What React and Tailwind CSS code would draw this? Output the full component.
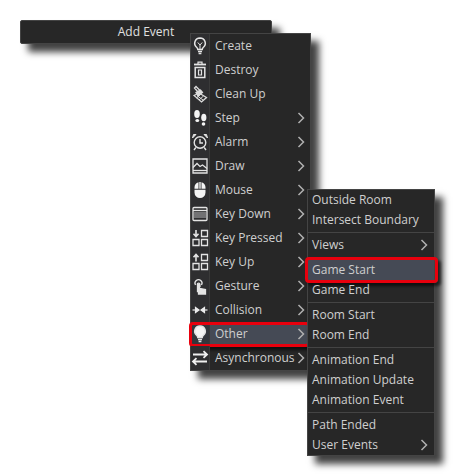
import React from 'react';

const Bulb = ({ filled }) => (
  <svg width="18" height="18" viewBox="0 0 18 18" fill={filled ? '#f4f4f4' : 'none'} stroke="#e4e4e4" strokeWidth="1.500">
    <path d="M9 1a5.300 5.300 0 0 0-3.200 9.500c.7.600 1 1.200 1 2h4.400c0-.8.300-1.400 1-2A5.300 5.300 0 0 0 9 1z" />
    <path d="M7 14.500h4M7.600 16.500h2.800" />
    {!filled && <path d="M6.800 5.500 9 8l2.200-2.500M9 8v4" strokeWidth="1" />}
  </svg>
);

const Trash = () => (
  <svg width="18" height="18" viewBox="0 0 18 18" fill="none" stroke="#e4e4e4" strokeWidth="1.500">
    <path d="M3 3.500h12" strokeWidth="1.800" />
    <path d="M7 3V1.200h4V3" strokeWidth="1.200" />
    <path d="M4.200 6.500h9.600v10H4.200z" />
    <path d="M7.500 9v5h3V9z" strokeWidth="1.200" />
  </svg>
);

const Brush = () => (
  <svg width="18" height="18" viewBox="0 0 18 18" fill="none" stroke="#dcdcdc" strokeWidth="1.300">
    <path d="M5 1.500 3.500 3l3.500 4 2-1.500z" />
    <path d="M5 7.500 9.500 5l2 2.500-4.500 3.500z" fill="#dcdcdc" />
    <path d="M3 10.500 8 8l7.500 4.500-5 4.500z" />
    <path d="M6.500 11 12 15M5.500 13l4-3.500M8 15l4.500-4" strokeWidth="1" />
  </svg>
);

const Steps = () => (
  <svg width="18" height="18" viewBox="0 0 18 18" fill="#f4f4f4">
    <ellipse cx="6" cy="5" rx="2.800" ry="4" />
    <ellipse cx="6.300" cy="11.500" rx="1.900" ry="1.500" />
    <ellipse cx="12.800" cy="8.500" rx="2.600" ry="3.800" />
    <ellipse cx="12.500" cy="15" rx="1.800" ry="1.700" />
  </svg>
);

const AlarmClock = () => (
  <svg width="18" height="18" viewBox="0 0 18 18" fill="none" stroke="#e4e4e4" strokeWidth="1.400">
    <circle cx="9" cy="9.500" r="5.800" />
    <path d="M9 6v4h3" />
    <path d="M1.500 5 5 1.500H2.500zM16.500 5 13 1.500h2.500z" fill="#e4e4e4" strokeWidth="1" />
    <path d="M4.800 14.500 3 17M13.200 14.500 15 17" />
  </svg>
);

const Picture = () => (
  <svg width="18" height="18" viewBox="0 0 18 18" fill="none" stroke="#e4e4e4" strokeWidth="1.300">
    <path d="M2 2h14v14H2z" />
    <path d="M2 10.500 6 6.500l3 3 2.500-1.500 4.500 3.500" />
    <path d="M2 13.500h14" />
  </svg>
);

const MouseIcon = () => (
  <svg width="18" height="18" viewBox="0 0 18 18" fill="#f4f4f4">
    <path d="M3.500 8.800h11v2.700a5.500 5.500 0 0 1-11 0z" />
    <path d="M3.500 7.800V6.500A5.500 5.500 0 0 1 7.500 1.200v6.600zM10.500 1.200a5.500 5.500 0 0 1 4 5.300v1.300h-4z" />
    <path d="M8.300 1h1.400v6.800H8.300z" />
  </svg>
);

const Keyboard = () => (
  <svg width="18" height="18" viewBox="0 0 18 18" fill="none" stroke="#e4e4e4" strokeWidth="1.300">
    <rect x="2" y="2.500" width="14" height="13" rx="1" />
    <path d="M2 5.500h14" />
    <path d="M3.500 8h11M3.500 10h11M3.500 12h11" strokeDasharray="1 1" />
  </svg>
);

const Keys = ({ up }) => (
  <svg width="18" height="18" viewBox="0 0 18 18" fill="none" stroke="#e4e4e4" strokeWidth="1.300">
    <path d="M10.500 1.500h6v6h-6zM2 10.500h6v6H2zM10.500 10.500h6v6h-6z" />
    <path d={up ? 'M5 8.500V2M2.500 4.300 5 1.500l2.500 2.800' : 'M5 1v6M2.500 4.700 5 7.500l2.500-2.800'} strokeWidth="1.600" />
  </svg>
);

const Hand = () => (
  <svg width="18" height="18" viewBox="0 0 18 18" fill="none" stroke="#e4e4e4" strokeWidth="1.300">
    <path d="M4.500 8a3.500 3.500 0 1 1 6 0" />
    <path d="M6.300 7.500a1.300 1.300 0 0 1 2.600 0V10" />
    <path d="M6.500 7.500h2v4l6 1V17H7.500v-2.500h-1z" fill="#e4e4e4" />
  </svg>
);

const CollisionIcon = () => (
  <svg width="18" height="18" viewBox="0 0 18 18" fill="#ececec" stroke="#ececec" strokeWidth="1.200">
    <path d="M1.500 9H5" />
    <path d="M8 9 4.500 6.500v5zM10 9l3.500-2.500v5z" />
    <path d="M13 9h3.500" />
  </svg>
);

const Arrows = () => (
  <svg width="18" height="18" viewBox="0 0 18 18" fill="none" stroke="#efefef" strokeWidth="1.800">
    <path d="M2 5.500h13.500M12.500 2.200 16 5.500l-3.500 3.300" />
    <path d="M16 12.500H2.500M5.500 9.200 2 12.500l3.500 3.300" />
  </svg>
);

const Chevron = () => (
  <svg width="8" height="12" viewBox="0 0 8 12" fill="none" stroke="#b0b0b0" strokeWidth="1.500" className="shrink-0">
    <path d="M1.500 1 6.500 6 1.500 11" />
  </svg>
);

const mainItems = [
  { label: 'Create', icon: <Bulb /> },
  { label: 'Destroy', icon: <Trash /> },
  { label: 'Clean Up', icon: <Brush /> },
  { label: 'Step', icon: <Steps />, more: true },
  { label: 'Alarm', icon: <AlarmClock />, more: true },
  { label: 'Draw', icon: <Picture />, more: true },
  { label: 'Mouse', icon: <MouseIcon />, more: true },
  { label: 'Key Down', icon: <Keyboard />, more: true },
  { label: 'Key Pressed', icon: <Keys />, more: true },
  { label: 'Key Up', icon: <Keys up />, more: true },
  { label: 'Gesture', icon: <Hand />, more: true },
  { label: 'Collision', icon: <CollisionIcon />, more: true },
  { label: 'Other', icon: <Bulb filled />, more: true, active: true },
  { label: 'Asynchronous', icon: <Arrows />, more: true },
];

// groups in the Other submenu, a divider goes between each
const subGroups = [
  [{ label: 'Outside Room' }, { label: 'Intersect Boundary' }],
  [{ label: 'Views', more: true }],
  [{ label: 'Game Start', active: true }, { label: 'Game End' }],
  [{ label: 'Room Start' }, { label: 'Room End' }],
  [{ label: 'Animation End' }, { label: 'Animation Update' }, { label: 'Animation Event' }],
  [{ label: 'Path Ended' }, { label: 'User Events', more: true }],
];

const shadow = 'shadow-[8px_8px_7px_rgba(0,0,0,0.75)]';
const font = { fontFamily: '"Open Sans", "Noto Sans", sans-serif' };

export default function App() {
  return (
    <div className="relative h-[476px] w-[455px] overflow-hidden bg-white text-[12px] text-[#cfcfcf]" style={font}>
      {/* Add Event title */}
      <div className={`absolute left-[20px] top-[20px] flex h-[24px] w-[252px] items-center justify-center rounded-[2px] border border-[#444] bg-[#272727] text-[#e0e0e0] ${shadow}`}>
        Add Event
      </div>

      {/* event list */}
      <div className={`absolute left-[190px] top-[33px] w-[121px] border border-[#444] bg-[#272727] ${shadow}`}>
        <div className="flex flex-col">
          {mainItems.map((item) => (
            <div key={item.label} className={`relative flex h-[24px] items-center ${item.active ? 'bg-[#454a55]' : ''}`}>
              <div className={`flex h-full w-[19px] shrink-0 items-center justify-center border-r border-[#3a3a3a] ${item.active ? 'bg-[#33363c]' : 'bg-[#2e2e30]'}`}>
                {item.icon}
              </div>
              <span className="ml-[5px] flex-1 whitespace-nowrap">{item.label}</span>
              {item.more && <div className="mr-[5px]"><Chevron /></div>}
              {item.active && <div className="absolute -left-[2px] right-0 top-0 -bottom-[1px] rounded-[4px] border-[3px] border-[#e8000d] shadow-[3px_3px_3px_rgba(0,0,0,0.6)]" />}
            </div>
          ))}
        </div>
      </div>

      {/* Other submenu */}
      <div className={`absolute left-[307px] top-[189px] w-[128px] border border-[#444] bg-[#272727] ${shadow}`}>
        {subGroups.map((group, i) => (
          <div key={i} className={i > 0 ? 'mt-[2px] border-t border-[#444] pt-[2px]' : ''}>
            {group.map((item) => (
              <div key={item.label} className={`relative flex h-[20px] items-center pl-[4px] pr-[6px] ${item.active ? 'bg-[#454a55]' : ''}`}>
                <span className="flex-1 whitespace-nowrap">{item.label}</span>
                {item.more && <Chevron />}
                {item.active && <div className="absolute -left-[3px] -right-[4px] -top-[3px] -bottom-[3px] rounded-[4px] border-[3px] border-[#e8000d] shadow-[3px_3px_3px_rgba(0,0,0,0.6)]" />}
              </div>
            ))}
          </div>
        ))}
      </div>
    </div>
  );
}
